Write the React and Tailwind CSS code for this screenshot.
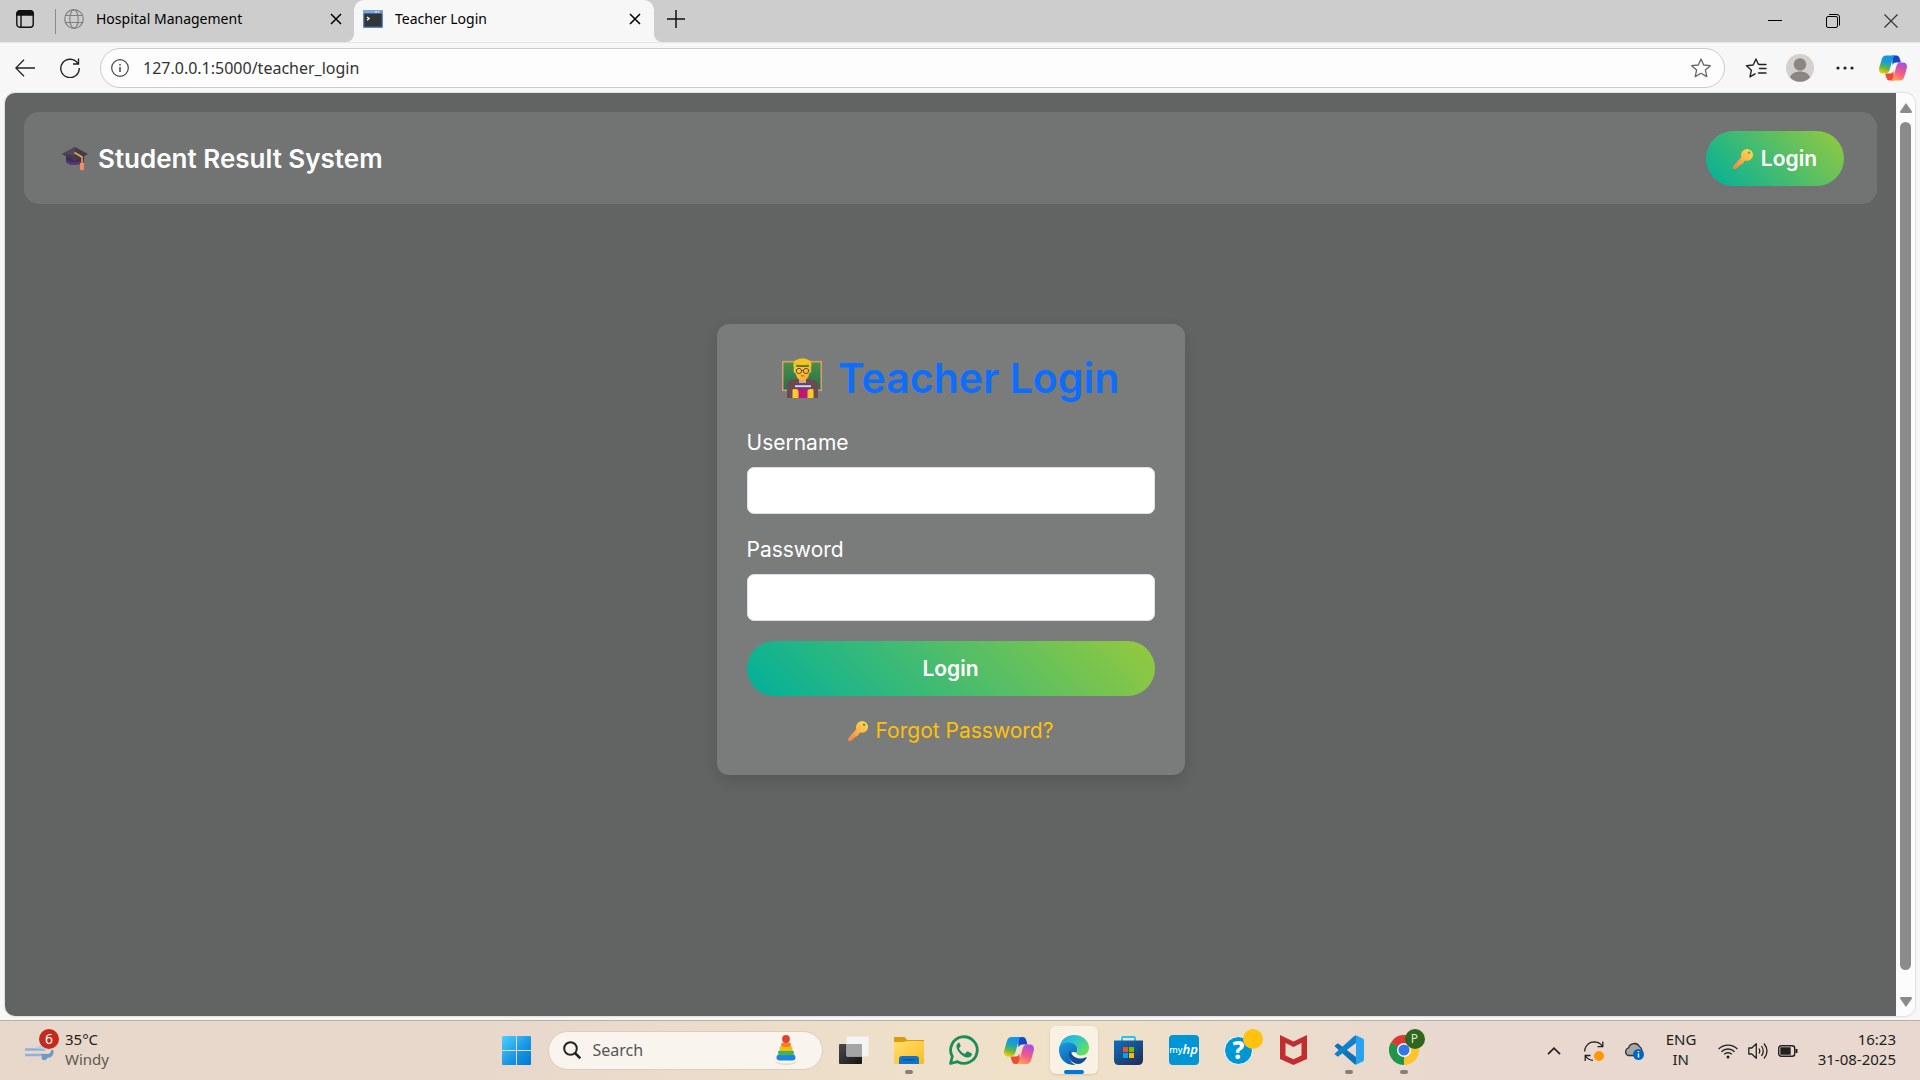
import React from "react";

function KeyIcon({ className }) {
  return (
    <svg viewBox="0 0 20 20" className={className} aria-hidden="true">
      <defs>
        <linearGradient id="key" x1="1" y1="0" x2="0" y2="1">
          <stop offset="0" stopColor="#ffe04a" />
          <stop offset=".5" stopColor="#fdb548" />
          <stop offset="1" stopColor="#f27c4a" />
        </linearGradient>
      </defs>
      <path fillRule="evenodd" fill="url(#key)" d="M14 0a6 6 0 0 1 6 6.200a6 6 0 0 1-8 5.200l-1.500 1.600.2 1.200-1.300.4-.8 1-1.500.3-2.600 2.900c-1 1.200-2 1.300-3.300 1.200C.1 20 0 18.800.2 17.300L8.300 8.200A6.200 6.200 0 0 1 14 0zM16 2.500a1.300 1.300 0 1 0 .1 2.600a1.300 1.300 0 0 0-.1-2.600z" />
    </svg>
  );
}

function CapIcon() {
  return (
    <svg viewBox="0 0 26 24" className="h-6 w-[26px]" aria-hidden="true">
      <path d="M4 9v6c2 4 14 4 18 0V9z" fill="#533573" />
      <path d="M4 9v3c3 4 14 4 18 0V9z" fill="#3d2b52" />
      <path d="M13 0 0 7l13 7.500L26 7z" fill="#433b4c" />
      <path d="M13 0 0 7l13 1.600z" fill="#51475c" />
      <path d="M12.500 5.500 20 10v7" fill="none" stroke="#f5a742" strokeWidth="1.500" />
      <path d="M18 16h4v6.500c-1.200 1-2.800 1-4 0z" fill="#f98c5e" />
    </svg>
  );
}

function TeacherIcon() {
  return (
    <svg viewBox="0 0 40 40" className="size-10" aria-hidden="true">
      <defs>
        <linearGradient id="board" x1="0" y1="0" x2="0" y2="1">
          <stop offset="0" stopColor="#4a9140" />
          <stop offset="1" stopColor="#226f55" />
        </linearGradient>
        <linearGradient id="face" x1="0" y1="0" x2="1" y2="1">
          <stop offset="0" stopColor="#ffd43b" />
          <stop offset="1" stopColor="#f4a71f" />
        </linearGradient>
      </defs>
      <rect x=".7" y="3.700" width="38.600" height="28.600" fill="url(#board)" stroke="#dd9a6c" strokeWidth="1.600" />
      <path d="M5 40V29c0-5 3-8 9-8h12c7 0 10 3 10 8v11z" fill="#6b4a50" />
      <path d="M17 21h7v4h-7z" fill="#cfa3a0" />
      <path d="M13.500 9c-2.500 0-2.500 6 .3 6.500C14.500 20 17 22.500 20.500 22.500s6-2.500 6.700-7c2.800-.5 2.800-6.500.3-6.500z" fill="url(#face)" />
      <path d="M11.800 9.500C10.500 5 12.500 2 15.500 1.500 18 0 24 0 26 1.700c3.500.8 4.300 4 3 7.800l-1.400 2-1-5c-4 .8-8 .8-12 0l-1.200 5z" fill="#f6c41c" />
      <g fill="none" stroke="#573b36" strokeWidth=".9">
        <circle cx="17" cy="13" r="2.600" />
        <circle cx="24" cy="13" r="2.600" />
        <path d="M19.600 12.500h1.800M13.500 12h1M26.600 12h1" />
      </g>
      <path d="M16.500 8.800q1.500-1 3 0M21.500 8.800q1.500-1 3 0" stroke="#c43d4b" strokeWidth="1" fill="none" />
      <path d="M18.500 17.500c1.200 1.200 2.800 1.200 4 0z" fill="#c9223d" />
      <path d="M13 27h16v2.500H13z" fill="#e1d8ee" />
      <path d="M13 26h16v1.300H13zM13 29.200h16V31H13z" fill="#5c4874" />
      <path d="M14 31h14v9H14z" fill="#c0157b" />
      <path d="M10.500 31.500c3-1 6-.5 6 2v6.500h-6zM31.500 31.500c-3-1-6-.5-6 2v6.500h6z" fill="#ffca28" />
    </svg>
  );
}

function CopilotIcon({ id, className }) {
  const a = id + "a";
  const b = id + "b";
  return (
    <svg viewBox="0 0 30 27" className={className} aria-hidden="true">
      <defs>
        <linearGradient id={a} x1=".6" y1="0" x2=".3" y2="1">
          <stop offset="0" stopColor="#1690ee" />
          <stop offset=".4" stopColor="#18a2c8" />
          <stop offset=".7" stopColor="#62b744" />
          <stop offset="1" stopColor="#f7c800" />
        </linearGradient>
        <linearGradient id={b} x1=".7" y1="0" x2=".3" y2="1">
          <stop offset="0" stopColor="#a550e6" />
          <stop offset=".5" stopColor="#f0568c" />
          <stop offset="1" stopColor="#ffa05c" />
        </linearGradient>
      </defs>
      <path d="M14 0h4.500c2.500 0 3.200 1.500 4 4l1 3.500h-5c-2.500 0-3.500 1.500-4 3z" fill="#1747c9" />
      <path d="M16 27h-4.500c-2.500 0-3.200-1.500-4-4l-1-3.500h5c2.500 0 3.500-1.500 4-3z" fill="#ee4b34" />
      <path d="M7.500 0H18c-2 0-2.800 2-3.500 4.500L11.500 15c-.8 2.800-2 4.500-4.500 4.500H4C.5 19.500-.5 16.500.3 13L3 3.800C3.800 1.300 5 0 7.500 0z" fill={"url(#" + a + ")"} />
      <path d="M22.500 27H12c2 0 2.800-2 3.500-4.500L18.500 12c.8-2.800 2-4.500 4.500-4.500h3c3.500 0 4.500 3 3.700 6.500L27 23.200c-.8 2.500-2 3.800-4.500 3.800z" fill={"url(#" + b + ")"} />
    </svg>
  );
}

function Close({ className }) {
  return (
    <svg viewBox="0 0 12 12" className={className} fill="none" stroke="currentColor" strokeWidth="1.500" aria-hidden="true">
      <path d="m1 1 10 10M11 1 1 11" />
    </svg>
  );
}

function TabStrip() {
  return (
    <div className="flex h-[42px] shrink-0 items-stretch bg-[#cdcdcd] text-black">
      <button aria-label="Tab actions" className="flex w-[55px] items-center pb-1 pl-4">
        <svg viewBox="0 0 18 18" className="size-[18px]" fill="none" stroke="#111" strokeWidth="1.400">
          <rect x=".8" y=".8" width="16.400" height="16.400" rx="3" />
          <path d="M1 3.500Q1 1 3.500 1h11Q17 1 17 3.500V5H1z" fill="#111" />
          <path d="M5 5v12" />
        </svg>
      </button>
      <div className="mt-[9px] h-[25px] w-px bg-[#8c8c8c]" />
      <div className="flex w-[298px] items-center pb-1 pr-3 pl-2">
        <svg viewBox="0 0 20 20" className="size-5 shrink-0" fill="none" stroke="#808080" strokeWidth="1.200" aria-hidden="true">
          <circle cx="10" cy="10" r="9.300" />
          <ellipse cx="10" cy="10" rx="4.200" ry="9.300" />
          <path d="M1.500 6.500h17M1.500 13.500h17" />
        </svg>
        <span className="ml-3 flex-1 truncate text-sm">Hospital Management</span>
        <button aria-label="Close Hospital Management"><Close className="size-3" /></button>
      </div>
      <div className="relative flex w-[300px] items-center rounded-t-[10px] bg-[#f7f7f7] pb-1 pr-[13px] pl-[9px]">
        <svg viewBox="0 0 8 8" className="absolute bottom-0 -left-2 size-2" aria-hidden="true"><path d="M8 0v8H0a8 8 0 0 0 8-8z" fill="#f7f7f7" /></svg>
        <svg viewBox="0 0 8 8" className="absolute -right-2 bottom-0 size-2" aria-hidden="true"><path d="M0 0v8h8a8 8 0 0 1-8-8z" fill="#f7f7f7" /></svg>
        <svg viewBox="0 0 20 18" className="h-[18px] w-5 shrink-0" aria-hidden="true">
          <rect width="20" height="18" rx="1" fill="#5b86c4" />
          <rect x="0" y="0" width="20" height="3.500" fill="#79a7e0" />
          <path d="M12 1.200h2v1.200h-2zM15 1.200h1.200v1.200H15z" fill="#e6effa" />
          <path d="M17 1.200h2v1.200h-2z" fill="#e2574c" />
          <rect x="1.300" y="3.500" width="17.400" height="13.200" fill="#333638" />
          <path d="m4 7 2.200 1.600L4 10.200" stroke="#fff" strokeWidth="1.300" fill="none" />
        </svg>
        <span className="ml-3 flex-1 truncate text-sm">Teacher Login</span>
        <button aria-label="Close Teacher Login"><Close className="size-3" /></button>
      </div>
      <button aria-label="New tab" className="pb-1 pl-[13px]">
        <svg viewBox="0 0 18 18" className="size-[18px]" stroke="#111" strokeWidth="1.500"><path d="M9 0v18M0 9h18" /></svg>
      </button>
      <div className="ml-auto flex items-center gap-11 pr-[22px]">
        <button aria-label="Minimize">
          <svg viewBox="0 0 14 14" className="size-3.5" stroke="#000"><path d="M0 6.500h14" /></svg>
        </button>
        <button aria-label="Restore">
          <svg viewBox="0 0 14 14" className="size-3.5" fill="none" stroke="#000">
            <rect x=".5" y="2.500" width="11" height="11" rx="1.500" />
            <path d="M3 .5h8q2.500 0 2.500 2.500v8.500" />
          </svg>
        </button>
        <button aria-label="Close window">
          <svg viewBox="0 0 14 14" className="size-3.5" stroke="#333" strokeWidth="1.200"><path d="m.5.500 13 13M13.500.500l-13 13" /></svg>
        </button>
      </div>
    </div>
  );
}

function Toolbar() {
  return (
    <div className="flex h-[50px] shrink-0 items-center border-t border-[#e6e6e6] bg-[#f7f7f7] pr-[13px] pl-[15px]">
      <button aria-label="Back">
        <svg viewBox="0 0 20 18" className="h-[18px] w-5" fill="none" stroke="#222" strokeWidth="1.300"><path d="M20 9H1M9 .8.800 9 9 17.200" /></svg>
      </button>
      <button aria-label="Refresh" className="ml-6">
        <svg viewBox="0 0 22 20" className="h-5 w-[22px]" fill="none" stroke="#222" strokeWidth="1.400"><path d="M18.800 5.500A9.200 9.200 0 1 0 20.200 10M19.500.500v5.500H14" /></svg>
      </button>
      <div className="ml-[19px] flex h-10 flex-1 items-center rounded-full border border-[#cbcbcb] bg-[#fdfdfd] pr-3 pl-2.5">
        <svg viewBox="0 0 18 18" className="size-[18px]" fill="none" stroke="#444" strokeWidth="1.200" aria-hidden="true">
          <circle cx="9" cy="9" r="8.300" />
          <path d="M9 8v5M9 5v1.500" strokeWidth="1.500" />
        </svg>
        <input aria-label="Address" defaultValue="127.0.0.1:5000/teacher_login" className="ml-3.5 flex-1 bg-transparent text-base text-[#333] outline-none" />
        <button aria-label="Favorite">
          <svg viewBox="0 0 22 20" className="h-5 w-[22px]" fill="none" stroke="#666" strokeWidth="1.300" strokeLinejoin="round"><path d="m11 1 2.700 6 6.600.7-4.900 4.400 1.400 6.500-5.800-3.300-5.800 3.300 1.400-6.500L1.700 7.700 8.300 7z" /></svg>
        </button>
      </div>
      <div className="ml-5 flex items-center">
        <button aria-label="Favorites list">
          <svg viewBox="0 0 22 20" className="h-5 w-[22px]" fill="none" stroke="#222" strokeWidth="1.400" strokeLinejoin="round" strokeLinecap="round"><path d="M14.500 6.500 13.200 6 11 1 8.200 7 1.500 7.700l4.900 4.500L5 18.800l5-3M14.500 10.500H21M14.500 6.500H21M13.500 15H21" /></svg>
        </button>
        <button aria-label="Profile" className="ml-[19px]">
          <svg viewBox="0 0 28 28" className="size-7">
            <circle cx="14" cy="14" r="14" fill="#d3d0cd" />
            <circle cx="14" cy="10.500" r="6.200" fill="#8b8683" />
            <path d="M4 23.500c2-8 18-8 20 0a14 14 0 0 1-20 0z" fill="#8b8683" />
          </svg>
        </button>
        <button aria-label="More" className="ml-[22px]">
          <svg viewBox="0 0 18 4" className="h-1 w-[18px]" fill="#222"><circle cx="2" cy="2" r="1.600" /><circle cx="9" cy="2" r="1.600" /><circle cx="16" cy="2" r="1.600" /></svg>
        </button>
        <button aria-label="Copilot" className="ml-[25px]"><CopilotIcon id="top" className="h-[26px] w-7" /></button>
      </div>
    </div>
  );
}

function Field({ id, label, type }) {
  return (
    <div className="flex flex-col gap-2">
      <label htmlFor={id} className="text-[21px] leading-8 text-white">{label}</label>
      <input id={id} type={type} className="h-[47px] w-full rounded-[7px] border border-[#dee2e6] bg-white px-4 text-black" />
    </div>
  );
}

function Page() {
  return (
    <main className="flex min-w-0 flex-1 flex-col bg-[#626463] font-['Inter',sans-serif]">
      <nav className="mx-[19px] mt-[19px] flex items-center justify-between rounded-[15px] bg-[#727473] pt-[19px] pr-[33px] pb-[18px] pl-[38px] text-white">
        <a href="#" className="flex items-center gap-2.5 text-[26px] leading-8 font-semibold"><CapIcon />Student Result System</a>
        <a href="#" className="flex h-[55px] items-center gap-2 rounded-full bg-linear-45/srgb from-[#00b09b] to-[#96c93d] px-[27px] text-[21px] font-semibold"><KeyIcon className="size-5" />Login</a>
      </nav>
      <div className="flex flex-1 items-start justify-center pt-[120px]">
        <form className="flex w-[468px] flex-col rounded-xl bg-[#7a7c7b] px-[30px] pt-[30px] pb-[29px] shadow-[0_6px_14px_rgba(0,0,0,0.12)]">
          <h1 className="mb-[25px] flex items-center justify-center gap-4 text-[41px] leading-[48px] font-semibold text-[#0d6efd]"><TeacherIcon />Teacher Login</h1>
          <div className="flex flex-col gap-5">
            <Field id="username" label="Username" type="text" />
            <Field id="password" label="Password" type="password" />
            <button type="button" className="h-[55px] rounded-full bg-linear-45/srgb from-[#00b09b] to-[#96c93d] text-[21px] font-semibold text-white">Login</button>
            <a href="#" className="flex items-center justify-center gap-2 text-[21px] leading-[30px] text-[#ffc107]"><KeyIcon className="size-5" />Forgot Password?</a>
          </div>
        </form>
      </div>
    </main>
  );
}

function Scrollbar() {
  return (
    <div className="flex w-[19px] flex-col items-center bg-[#fcfcfc] pt-2.5 pb-[9px]" aria-hidden="true">
      <svg viewBox="0 0 12 10" className="h-2.5 w-3" fill="#8b8b8b"><path d="M6 0 12 8.500Q12 10 11 10H1Q0 10 0 8.500z" /></svg>
      <div className="mt-[9px] mb-[27px] w-[11px] flex-1 rounded-full bg-[#8b8b8b]" />
      <svg viewBox="0 0 12 10" className="h-2.5 w-3" fill="#8b8b8b"><path d="M6 10 0 1.500Q0 0 1 0h10q1 0 1 1.500z" /></svg>
    </div>
  );
}

function Slot({ label, active, mark, children }) {
  return (
    <button aria-label={label} className={"relative flex size-12 items-center justify-center rounded-md " + (active ? "bg-[#f9f1e4] shadow-sm" : "")}>
      {children}
      {active && <span className="absolute bottom-0 h-1 w-5 rounded-full bg-[#0078d7]" />}
      {mark && <span className="absolute bottom-0 h-1 w-2 rounded-full bg-[#877f76]" />}
    </button>
  );
}

function TaskIcons() {
  return (
    <div className="flex items-center gap-[7px] pb-px">
      <Slot label="Start">
        <svg viewBox="0 0 29 29" className="size-[29px]">
          <defs>
            <linearGradient id="win" gradientUnits="userSpaceOnUse" x1="0" y1="0" x2="29" y2="29"><stop offset="0" stopColor="#4fd0ff" /><stop offset=".6" stopColor="#1593e2" /><stop offset="1" stopColor="#0078d4" /></linearGradient>
          </defs>
          <path fill="url(#win)" d="M1 0h13v14H0V1Q0 0 1 0zM15 0h13q1 0 1 1v13H15zM0 15h14v14H1q-1 0-1-1zM15 15h14v13q0 1-1 1H15z" />
        </svg>
      </Slot>
      <label className="flex h-[39px] w-[275px] items-center rounded-full border border-[#dccdbd] bg-[#f9f4ee] pr-[25px] pl-3.5">
        <svg viewBox="0 0 18 18" className="size-[18px]" fill="none" stroke="#222" strokeWidth="2"><circle cx="7.500" cy="7.500" r="6.300" /><path d="m12 12 5.300 5.300" strokeWidth="2.500" /></svg>
        <input aria-label="Search" placeholder="Search" className="ml-3 min-w-0 flex-1 bg-transparent text-base outline-none placeholder:text-[#555]" />
        <svg viewBox="0 0 22 30" className="h-[30px] w-[22px]" aria-hidden="true">
          <ellipse cx="11" cy="26.500" rx="10.500" ry="3.500" fill="#e5dcc9" />
          <ellipse cx="11" cy="25.300" rx="10.500" ry="3" fill="#fbf7ec" />
          <rect x="1.500" y="19.500" width="19" height="6" rx="3" fill="#1b84e6" />
          <rect x="3" y="15.300" width="16" height="5" rx="2.500" fill="#43b355" />
          <rect x="4.500" y="11.300" width="13" height="4.700" rx="2.300" fill="#fbbc12" />
          <rect x="6" y="7.500" width="10" height="4.500" rx="2.200" fill="#f5821f" />
          <circle cx="11" cy="4" r="3.900" fill="#e04330" />
        </svg>
      </label>
      <Slot label="Task view">
        <svg viewBox="0 0 30 28" className="h-7 w-[30px]">
          <defs><linearGradient id="tv" x1="0" y1="0" x2="1" y2="1"><stop offset="0" stopColor="#4a4a4a" /><stop offset="1" stopColor="#141414" /></linearGradient></defs>
          <rect y="8" width="23" height="20" rx="1" fill="url(#tv)" />
          <rect x="7.500" y=".5" width="22" height="20" rx="1" fill="#f4f4f4" />
          <path d="M7.500 8H23v12.500H7.500z" fill="#a5a5a5" />
        </svg>
      </Slot>
      <Slot label="File Explorer" mark>
        <svg viewBox="0 0 30 27" className="h-[27px] w-[30px]">
          <defs><linearGradient id="fx" x1="0" y1="0" x2="1" y2="1"><stop offset="0" stopColor="#ffdf6e" /><stop offset="1" stopColor="#fcbc22" /></linearGradient></defs>
          <path d="M1 0h9q1 0 1.500 1l1.500 2h17v6H0V1q0-1 1-1z" fill="#dd9a0b" />
          <path d="M0 5h10l3-1h16q1 0 1 1v21q0 1-1 1H1q-1 0-1-1z" fill="url(#fx)" />
          <path d="M5 27v-5q0-3 3-3h14q3 0 3 3v5z" fill="#1173c7" />
          <path d="M9 22.800h12" stroke="#07508f" strokeWidth="1.200" />
        </svg>
      </Slot>
      <Slot label="WhatsApp">
        <svg viewBox="0 0 30 30" className="size-[30px]">
          <path d="M1.500 28.500 3.300 21.500A13.300 13.300 0 1 1 8.500 26.700z" fill="none" stroke="#1c8c5a" strokeWidth="2.800" strokeLinejoin="round" />
          <path d="M10.200 7.500c-.7 0-3 1.700-2.700 4.500.6 4.600 6.300 10.300 11 10.600 2.500.2 4.200-1.400 4.400-3.300 0-.7-.3-1-1-1.300l-2.900-1.400c-.7-.3-1.100-.2-1.600.5l-1.100 1.300c-.4.5-.8.5-1.400.2-2-1-3.700-2.600-4.700-4.500-.3-.5-.2-.9.200-1.300l.9-1c.4-.5.4-.9.200-1.500l-1-2.300c-.3-.5-.3-.5-.3-.5z" fill="#1c8c5a" />
        </svg>
      </Slot>
      <Slot label="Copilot"><CopilotIcon id="task" className="h-[27px] w-[30px]" /></Slot>
      <Slot label="Microsoft Edge" active>
        <svg viewBox="0 0 30 30" className="size-[30px]">
          <defs>
            <linearGradient id="e1" x1="0" y1="0" x2="1" y2=".6"><stop offset="0" stopColor="#25a8dc" /><stop offset=".5" stopColor="#2dc3d2" /><stop offset="1" stopColor="#62e05a" /></linearGradient>
            <linearGradient id="e2" x1="0" y1="0" x2=".5" y2="1"><stop offset="0" stopColor="#1b9de2" /><stop offset="1" stopColor="#0d62b5" /></linearGradient>
          </defs>
          <path d="M0 14C1 5.500 7 0 15 0c9 0 15 6 15 12.500 0 5-3.500 8-7.500 8-4 0-5.500-1.500-4.500-3 2-3.500-1-6.500-5-7.500-5-1-10 .5-13 4z" fill="url(#e1)" />
          <path d="M0 15c0-5 4.500-7.500 9-7.500 6.500 0 9.500 4 9.300 7.500-.1 1.500-.8 2.200-.8 3-4-3-8 1-6.500 6 .8 3 3 5 5.500 6C7 30.500 0 24 0 15z" fill="url(#e2)" />
          <path d="M11.500 15.500C8.500 19 10 26 16 28.500c4.500 1.500 8.500-.5 11.500-5.300.5-.8 0-1.300-.8-.9-5 2.500-11.500 1-14-3.300-.6-1.200-1-2.200-1.200-3.500z" fill="#114d98" />
        </svg>
      </Slot>
      <Slot label="Microsoft Store">
        <svg viewBox="0 0 29 29" className="size-[29px]">
          <defs><linearGradient id="st" x1="0" y1="0" x2=".8" y2="1"><stop offset="0" stopColor="#0f70bd" /><stop offset="1" stopColor="#20315c" /></linearGradient></defs>
          <path d="M8 6V2q0-1 1-1h11q1 0 1 1v4" fill="none" stroke="#27c1f3" strokeWidth="1.800" />
          <path d="M0 4.500h29V24q0 5-5 5H5q-5 0-5-5z" fill="url(#st)" />
          <path d="M9 11h5v5H9z" fill="#f25022" /><path d="M15 11h5v5h-5z" fill="#7fba00" /><path d="M9 17h5v5H9z" fill="#00a4ef" /><path d="M15 17h5v5h-5z" fill="#ffb900" />
        </svg>
      </Slot>
      <Slot label="myHP">
        <span className="flex size-[30px] items-center justify-center rounded-sm bg-[#0096d6] text-white"><span className="text-[9px] font-medium">my</span><span className="text-[13px] font-semibold italic">hp</span></span>
      </Slot>
      <Slot label="HP Support">
        <span className="flex size-[29px] items-center justify-center rounded-full border border-white bg-[#0096d6] text-[24px] leading-7 font-extrabold text-white">?</span>
        <span className="absolute top-[3px] right-0 size-5 rounded-full bg-[#ffc20e]" />
      </Slot>
      <Slot label="McAfee">
        <svg viewBox="0 0 27 30" className="h-[30px] w-[27px]"><path fill="#c22d2f" d="m0 0 13.500 6.500L27 0v24l-13.500 6L0 24zM5.500 8v12.500l8 3.700 8-3.700V8l-8 4z" fillRule="evenodd" /></svg>
      </Slot>
      <Slot label="Visual Studio Code" mark>
        <svg viewBox="0 0 30 30" className="size-[30px]">
          <path d="M1 10.500 3 8.700q.8-.5 1.600 0L22 22v7.500q-1 .3-2-.7L.800 11.500q-.4-.5.200-1z" fill="#0f73b9" />
          <path d="M1 19.500 3 21.300q.8.500 1.600 0L22 8V.500q-1-.3-2 .7L.800 18.500q-.4.500.2 1z" fill="#1180cc" />
          <path d="M22 .300 28.800 3.500Q30 4 30 5.200v19.600q0 1.200-1.200 1.700L22 29.700z" fill="#29a3f0" />
        </svg>
      </Slot>
      <Slot label="Google Chrome" mark>
        <svg viewBox="0 0 30 30" className="size-[30px]">
          <path d="M15 15 2 7.500A15 15 0 0 1 28 7.500z" fill="#dc3a2e" />
          <path d="M15 15 28 7.500A15 15 0 0 1 15 30z" fill="#fbc52b" />
          <path d="M15 15v15A15 15 0 0 1 2 7.500z" fill="#24934a" />
          <path d="m2 7.500 6.500 11.200L15 15z" fill="#24934a" />
          <path d="M15 30l6.500-11.200L15 15z" fill="#fbc52b" />
          <circle cx="15" cy="15" r="7" fill="#fff" /><circle cx="15" cy="15" r="5.600" fill="#3477e6" />
        </svg>
        <span className="absolute top-[3px] right-[3px] flex size-5 items-center justify-center rounded-full bg-[#2f651d] text-[12px] text-[#dce8d6]">P</span>
      </Slot>
    </div>
  );
}

function Taskbar() {
  return (
    <footer className="grid h-[60px] shrink-0 grid-cols-[1fr_auto_1fr] items-center border-t border-[#b9afa5] bg-linear-to-r from-[#e8d8cc] from-25% via-[#f0e2c8] via-55% to-[#e8d8cf] to-75% text-[#222]">
      <button className="flex items-center gap-2.5 pb-1 pl-[25px] text-left text-[15px] leading-5">
        <span className="relative block">
          <svg viewBox="0 3 30 32" className="h-8 w-[30px]" aria-hidden="true">
            <path d="M0 19.500h20M0 25h22" stroke="#8fb0d8" strokeWidth="2.600" />
            <path d="M10 18c4-1 8-5 9-9l6 11z" fill="#b7cfea" />
            <path d="M16 24h6q4 0 4-4h2.500q1 7-6 8-2 3-4.500 2-2.500-1.500-1-4z" fill="#6f98c4" />
          </svg>
          <span className="absolute -top-1 left-3.5 flex size-5 items-center justify-center rounded-full bg-[#c42b1c] text-[14px] text-white">6</span>
        </span>
        <span>35°C<br /><span className="text-[#5d5852]">Windy</span></span>
      </button>
      <TaskIcons />
      <div className="flex items-center justify-end pr-6 text-[15px] leading-5">
        <button aria-label="Hidden icons" className="mr-[23px]">
          <svg viewBox="0 0 14 8" className="h-2 w-3.5" fill="none" stroke="#222" strokeWidth="1.700"><path d="M1 7.200 7 1.200l6 6" /></svg>
        </button>
        <button aria-label="Sync" className="mr-5">
          <svg viewBox="0 0 20 20" className="size-5" fill="none" stroke="#222" strokeWidth="1.300"><path d="M.8 10.500V8.500Q3 1 10 .8 15.500.8 18 4.800M18.800.5v5.200H13.500M1.200 20v-5.500h5.300M1.500 15Q4 19 9 19.300" /><circle cx="15" cy="15" r="5" fill="#ff9800" stroke="none" /></svg>
        </button>
        <button aria-label="OneDrive" className="mr-[22px]">
          <svg viewBox="0 0 20 18" className="h-[18px] w-5"><path d="M4 13.500A4 4 0 0 1 4.500 6 6 6 0 0 1 15.500 4.500Q18 6 18 9L12 13.500z" fill="#a7a7a7" stroke="#333" strokeWidth="1.300" /><circle cx="14.500" cy="12.500" r="5.500" fill="#0067c0" /><path d="M14.500 11.500v4M14.500 9v1.300" stroke="#fff" strokeWidth="1.400" /></svg>
        </button>
        <button className="mr-[22px] w-[30px] pb-1 text-center">ENG<br />IN</button>
        <button aria-label="Network, sound and battery" className="mr-5 flex items-center gap-2.5">
          <svg viewBox="0 0 20 16" className="h-4 w-5" fill="none" stroke="#222" strokeWidth="1.400"><path d="M.7 6a13 13 0 0 1 18.600 0M3.500 8.700a9.200 9.200 0 0 1 13 0M6.200 11.300a5.400 5.400 0 0 1 7.600 0" /><circle cx="10" cy="14" r="1.500" fill="#222" stroke="none" /></svg>
          <svg viewBox="0 0 20 18" className="h-[18px] w-5" fill="none" stroke="#222" strokeWidth="1.300" strokeLinejoin="round"><path d="M.8 6h3l4.500-4.300v14.600L3.800 12h-3zM11 6.500q1.500 2.500 0 5M13.500 4q3.500 5 0 10M16 1.500q6 7.500 0 15" /></svg>
          <svg viewBox="0 0 20 12" className="h-3 w-5" fill="none" stroke="#222" strokeWidth="1.400"><rect x=".7" y=".7" width="16" height="10.600" rx="2.500" /><path d="M3 3h9v6H3z" fill="#222" /><path d="M18.500 4v4" strokeWidth="2" /></svg>
        </button>
        <time className="pb-1 text-right">16:23<br />31-08-2025</time>
      </div>
    </footer>
  );
}

export default function App() {
  return (
    <div className="flex min-h-screen flex-col bg-[#f7f7f7] font-['Noto_Sans',sans-serif]">
      <TabStrip />
      <Toolbar />
      <div className="mx-[5px] mt-px mb-1 flex flex-1 overflow-hidden rounded-[10px] shadow-[0_0_2px_rgba(0,0,0,0.3)]">
        <Page />
        <Scrollbar />
      </div>
      <Taskbar />
    </div>
  );
}
